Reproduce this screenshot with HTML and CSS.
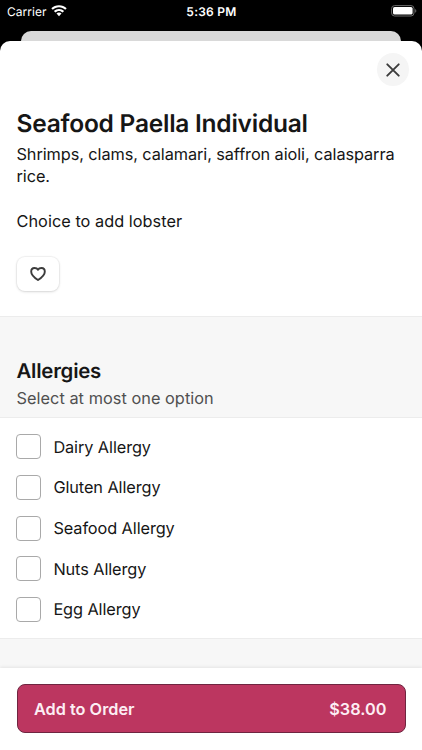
FILE: index.html
```html
<!DOCTYPE html>
<html lang="en">
<head>
<meta charset="utf-8">
<title>Seafood Paella Individual</title>
<link rel="stylesheet" href="styles.css">
</head>
<body>
<header class="status">
  <div class="carrier"><span>Carrier</span>
    <svg width="16" height="12" viewBox="0 0 16 12" fill="#fff"><path d="M8 .2C5 .2 2.300 1.300.3 3.200l1.500 1.600C3.500 3.200 5.600 2.300 8 2.300s4.500.9 6.200 2.500l1.500-1.600C13.700 1.300 11 .2 8 .2z"/><path d="M8 3.900c-2 0-3.800.8-5.100 2l1.500 1.600C5.400 6.600 6.600 6 8 6s2.600.6 3.600 1.500l1.500-1.600C11.800 4.700 10 3.900 8 3.900z"/><path d="M8 7.500c-1 0-1.900.4-2.500 1L8 11.200l2.500-2.700c-.6-.6-1.500-1-2.500-1z"/></svg>
  </div>
  <div class="time">5:36 PM</div>
  <div class="battery">
    <svg width="26" height="12" viewBox="0 0 26 12"><rect x=".6" y=".6" width="22.400" height="10.400" rx="3" fill="none" stroke="#6b6b6b"/><rect x="2" y="2" width="19.600" height="7.600" rx="1.600" fill="#fff"/><path d="M24.200 4v3.800c1.500-.6 1.500-3.200 0-3.800z" fill="#6b6b6b"/></svg>
  </div>
</header>
<div class="behind"></div>
<main class="sheet">
  <div class="toolbar">
    <button class="close" aria-label="Close"><svg width="14" height="14" viewBox="0 0 14 14"><path d="M1.300 1.300l11.400 11.400M12.700 1.300L1.300 12.700" stroke="#3c3c3c" stroke-width="1.900" stroke-linecap="round"/></svg></button>
  </div>
  <section class="item">
    <h1>Seafood Paella Individual</h1>
    <p class="desc">Shrimps, clams, calamari, saffron aioli, calasparra rice.</p>
    <p class="desc extra">Choice to add lobster</p>
    <button class="fav" aria-label="Favorite"><svg width="16" height="14" viewBox="0 0 16 14"><path d="M8 13C5.400 11.300 1.200 8.400 1.200 4.700 1.200 2.500 2.600 1 4.500 1 6 1 7.300 1.500 8 2.700 8.700 1.500 10 1 11.500 1c1.900 0 3.300 1.500 3.300 3.700 0 3.700-4.200 6.600-6.800 8.300z" fill="none" stroke="#3c3c3c" stroke-width="1.900" stroke-linejoin="round"/></svg></button>
  </section>
  <section class="group">
    <h2>Allergies</h2>
    <p>Select at most one option</p>
  </section>
  <ul class="options">
    <li><span class="box"></span><span>Dairy Allergy</span></li>
    <li><span class="box"></span><span>Gluten Allergy</span></li>
    <li><span class="box"></span><span>Seafood Allergy</span></li>
    <li><span class="box"></span><span>Nuts Allergy</span></li>
    <li><span class="box"></span><span>Egg Allergy</span></li>
  </ul>
  <div class="spacer"></div>
  <footer class="bar">
    <button class="add"><span>Add to Order</span><span>$38.00</span></button>
  </footer>
</main>
</body>
</html>
```
FILE: styles.css
```css
* { box-sizing: border-box; }
body {
  margin: 0;
  width: 422px;
  height: 750px;
  overflow: hidden;
  display: flex;
  flex-direction: column;
  background: #000;
  color: #161616;
  font-family: Inter, "Liberation Sans", sans-serif;
  font-size: 16.300px;
  text-rendering: geometricPrecision;
}
h1, h2, p, ul { margin: 0; padding: 0; }
button { font: inherit; border: 0; padding: 0; }
svg { display: block; }
.status {
  flex: none;
  height: 31px;
  padding: 0 6px 9px 7px;
  display: grid;
  grid-template-columns: 1fr auto 1fr;
  align-items: center;
  color: #fff;
  font-size: 12px;
}
.carrier { display: flex; align-items: center; gap: 4px; letter-spacing: .05px; }
.time { font-weight: 600; letter-spacing: .25px; }
.battery { justify-self: end; margin-right: -1px; }
.behind {
  flex: none;
  height: 10px;
  margin: 0 21px;
  background: #d9d9d9;
  border-radius: 10px 10px 0 0;
}
.sheet {
  flex: 1;
  display: flex;
  flex-direction: column;
  background: #fff;
  border-radius: 10px 10px 0 0;
}
.toolbar {
  display: flex;
  justify-content: flex-end;
  padding: 12px 13px 0;
}
.close {
  width: 32px;
  height: 33px;
  border-radius: 50%;
  background: #f5f5f5;
  display: grid;
  place-items: center;
}
.item { height: 230px; padding: 21px 17px 0 16.500px; }
h1 { font-size: 24.500px; line-height: 32px; font-weight: 600; letter-spacing: -.24px; }
.desc { margin-top: 4px; line-height: 22.400px; letter-spacing: -.075px; }
.desc.extra { margin-top: 22.400px; letter-spacing: .04px; }
.fav {
  margin-top: 24px;
  width: 42px;
  height: 34px;
  border-radius: 8px;
  background: #fff;
  display: grid;
  place-items: center;
  box-shadow: 0 0 1px 1px rgba(0,0,0,.05), 0 1px 3px rgba(0,0,0,.12);
}
.group {
  height: 102px;
  padding: 39.500px 17px 0 16.500px;
  background: #f7f7f7;
  border-top: 1px solid #ececec;
  border-bottom: 1px solid #ececec;
}
h2 { font-size: 20.400px; line-height: 27px; font-weight: 600; letter-spacing: -.22px; }
.group p { margin-top: 3px; line-height: 22px; color: #505050; letter-spacing: .05px; }
.options { list-style: none; padding: 8.300px 17px 0 16.400px; height: 220px; letter-spacing: -.08px; }
.options li { height: 40.700px; display: flex; align-items: center; gap: 12px; }
.box { width: 25px; height: 25px; border: 1px solid #a9a9a9; border-radius: 4px; }
.spacer { height: 30px; background: #f7f7f7; border-top: 1px solid #ececec; }
.bar {
  flex: 1;
  padding: 16px 17px 0 16.500px;
  background: #fff;
  box-shadow: 0 -1px 3px rgba(0,0,0,.08);
}
.add {
  width: 389px;
  height: 49px;
  padding: 0 18px 0 16.500px;
  display: flex;
  align-items: center;
  justify-content: space-between;
  color: #fdeef4;
  font-weight: 600;
  background: #bc3660;
  border: 1px solid #6f2540;
  border-radius: 8px;
}
```
